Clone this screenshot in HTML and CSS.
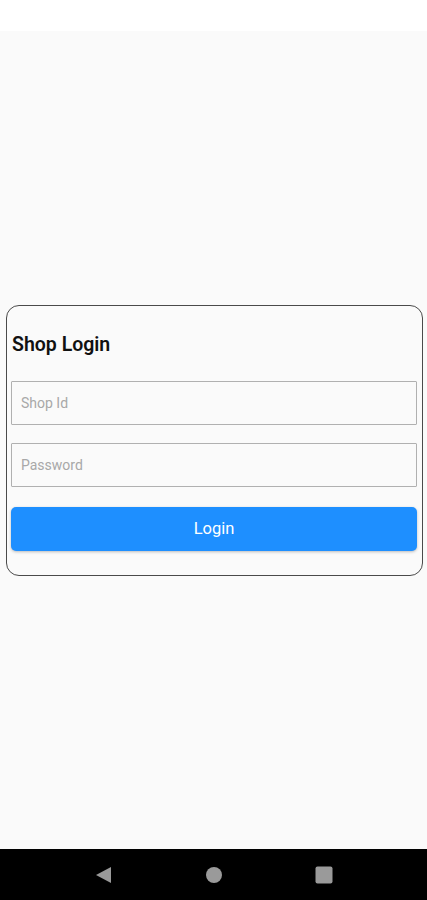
FILE: index.html
```html
<!DOCTYPE html>
<html lang="en">
<head>
<meta charset="utf-8">
<title>Shop Login</title>
<link rel="stylesheet" href="styles.css">
</head>
<body>
<div class="screen">
  <div class="status-bar"></div>
  <main class="content">
    <form class="card">
      <h1 class="title">Shop Login</h1>
      <input class="field" type="text" placeholder="Shop Id">
      <input class="field" type="password" placeholder="Password">
      <button class="login-btn" type="button">Login</button>
    </form>
  </main>
  <nav class="nav-bar">
    <svg class="nav-icon" width="18" height="18" viewBox="0 0 18 18"><path d="M16 1 L16 17 L1 9 Z" fill="#9a9a9a"/></svg>
    <svg class="nav-icon" width="18" height="18" viewBox="0 0 18 18"><circle cx="9" cy="9" r="8" fill="#9a9a9a"/></svg>
    <svg class="nav-icon" width="18" height="18" viewBox="0 0 18 18"><rect x="0.5" y="0.5" width="17" height="17" rx="2" fill="#9a9a9a"/></svg>
  </nav>
</div>
</body>
</html>
```
FILE: styles.css
```css
* { box-sizing: border-box; }
html, body { margin: 0; padding: 0; }
body {
  font-family: Roboto, "Liberation Sans", Arial, sans-serif;
  background: #fafafa;
}
.screen {
  display: flex;
  flex-direction: column;
  height: 900px;
}
.status-bar {
  height: 31px;
  background: #ffffff;
  flex: none;
}
.content {
  flex: 1;
  display: flex;
  align-items: center;
  justify-content: center;
  background: #fafafa;
}
.card {
  width: 417px;
  margin-left: 1px;
  border: 1.5px solid #4a4a4a;
  border-radius: 13px;
  padding: 27px 4.5px 24px 4.5px;
  display: flex;
  flex-direction: column;
  background: #fafafa;
}
.title {
  margin: 0 0 24px 1px;
  font-size: 19.5px;
  line-height: 24px;
  font-weight: 600;
  color: #111;
}
.field {
  height: 44px;
  border: 1.5px solid #b0b0b0;
  border-radius: 1px;
  background: #fafafa;
  padding: 0 9px;
  font-family: Roboto, "Liberation Sans", Arial, sans-serif;
  font-size: 14px;
  color: #333;
  outline: none;
  margin-bottom: 18px;
}
.field::placeholder { color: #a8a8a8; }
.field + .field { margin-bottom: 20px; }
.login-btn {
  height: 44px;
  border: none;
  border-radius: 5px;
  background: #1e8fff;
  color: #ffffff;
  font-family: Roboto, "Liberation Sans", Arial, sans-serif;
  font-size: 16.5px;
  font-weight: 400;
  padding: 0;
  box-shadow: 0 1px 3px rgba(0,0,0,0.25);
}
.nav-bar {
  height: 51px;
  flex: none;
  background: #000;
  display: flex;
  align-items: center;
  justify-content: center;
  gap: 92px;
}
```
